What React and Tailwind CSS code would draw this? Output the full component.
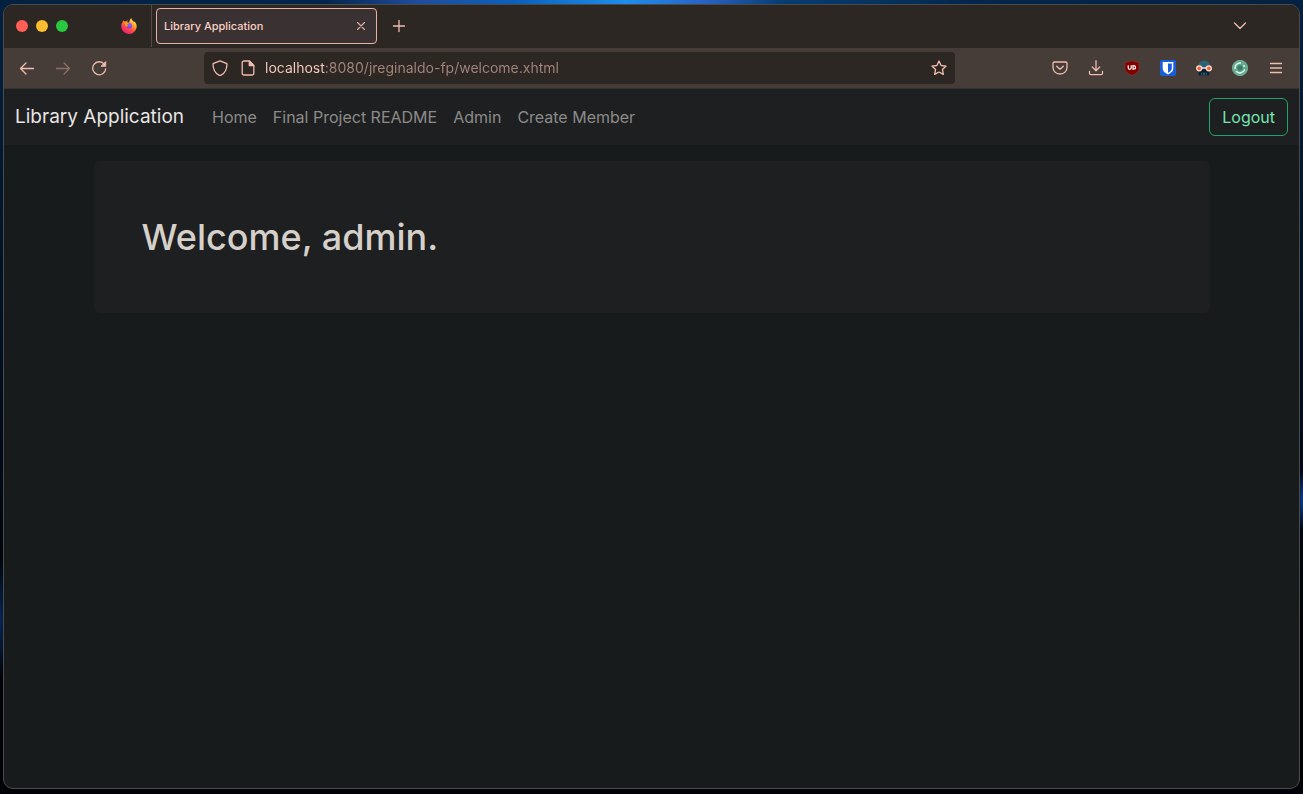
import React from "react";

const line = {
  fill: "none",
  stroke: "currentColor",
  strokeWidth: 1.3,
  strokeLinecap: "round",
  strokeLinejoin: "round",
};

function Icon({ children, className = "size-4" }) {
  return (
    <svg viewBox="0 0 16 16" className={className} aria-hidden="true" {...line}>
      {children}
    </svg>
  );
}

function ToolButton({ label, children, className = "" }) {
  return (
    <button
      type="button"
      aria-label={label}
      className={`flex h-8 w-9 shrink-0 items-center justify-center ${className}`}
    >
      {children}
    </button>
  );
}

function FirefoxLogo() {
  return (
    <svg viewBox="0 0 16 16" className="size-4" aria-hidden="true">
      <defs>
        <linearGradient id="fx-body" x1="0.85" y1="0.05" x2="0.25" y2="1">
          <stop offset="0" stopColor="#fff44f" />
          <stop offset="0.35" stopColor="#ffa52a" />
          <stop offset="0.6" stopColor="#ff4f3e" />
          <stop offset="1" stopColor="#f0148b" />
        </linearGradient>
        <radialGradient id="fx-globe" cx="0.6" cy="0.3" r="0.8">
          <stop offset="0" stopColor="#b05bf5" />
          <stop offset="1" stopColor="#4a4be0" />
        </radialGradient>
      </defs>
      <path
        fill="url(#fx-body)"
        d="M10.300 0c.1 1.500.9 2.200 2 3.200.4.300.7.700.9 1 .1-.3.100-.6 0-.9 1.500 1 2.500 3 2.500 5.100A7.700 7.600 0 0 1 8 16 7.700 7.700 0 0 1 .2 8.400c0-2 .6-3.400 1.500-4.600.1-.7.400-1.200.7-1.600.1.600.4 1 .8 1.300.6-.2 1.200-.2 1.800 0C5.500 2.900 6.200 2.500 7 2.400c-.6.600-.8 1-.8 1.600.3.400.9.500 1.800.5C8.800 3.500 8.300 1.500 10.300 0z"
      />
      <circle cx="8.200" cy="7.600" r="2.900" fill="url(#fx-globe)" />
      <path
        fill="#ff9a1f"
        d="M3.200 4.600c1.100-.4 2 .1 2.800.4.900.2 1.600 0 2 .1-.1.800-1.500 1-1.700 1.700-.2.800.5 1.300 1.400 1.300-.8.800-2.600.7-3.300-.4-.6-.9-.8-2.200-1.200-3.100z"
      />
    </svg>
  );
}

function UblockIcon() {
  return (
    <svg viewBox="0 0 16 16" className="size-4" aria-hidden="true">
      <path
        d="M8 .6C6 1.900 3.500 2.300 1 2.300v6c0 3.700 3.500 5.300 7 7.300 3.500-2 7-3.600 7-7.300v-6C12.500 2.300 10 1.900 8 .6z"
        fill="#800000"
        stroke="#a33a36"
        strokeWidth=".5"
      />
      <path
        d="M4.200 5.200v2.600a1.500 1.500 0 0 0 3 0V5.200M9 5.700v3.400h.8a1.700 1.700 0 0 0 0-3.400z"
        fill="none"
        stroke="#fff"
        strokeWidth="1.200"
      />
    </svg>
  );
}

function BitwardenIcon() {
  return (
    <svg viewBox="0 0 16 16" className="size-4" aria-hidden="true">
      <rect width="16" height="16" rx="2" fill="#175ddc" />
      <path d="M2.700 2h10.600v6.400c0 2.800-2.500 4.600-5.300 6-2.800-1.400-5.300-3.200-5.300-6z" fill="#fff" />
      <path d="M8 3.500h3.800v4.900c0 1.900-1.800 3.200-3.800 4.300z" fill="#175ddc" />
    </svg>
  );
}

function GogglesIcon() {
  return (
    <svg viewBox="0 0 16 16" className="size-4" aria-hidden="true">
      <path d="M2 8C1.800 3.500 4.500.6 8.200.6S14.500 3.500 14 8z" fill="#2b6175" />
      <path d="M2.500 9h11l-.3 6.400H2.800z" fill="#10202b" />
      <path d="M5 12.800h6v2.400H5z" fill="#2b6175" />
      <path d="M6.500 13v2M9.500 13v2" stroke="#10202b" />
      <path d="M6 8h4" stroke="#f4ded3" strokeWidth="1.500" />
      <circle cx="3.200" cy="8.300" r="2.500" fill="#f0603c" stroke="#f7e0d6" strokeWidth="1.300" />
      <circle cx="12.800" cy="8.300" r="2.500" fill="#f0603c" stroke="#f7e0d6" strokeWidth="1.300" />
    </svg>
  );
}

function CookieIcon() {
  return (
    <svg viewBox="0 0 16 16" className="size-4" aria-hidden="true">
      <circle cx="8" cy="8" r="7.700" fill="#63a98f" stroke="#8cc5b0" strokeWidth=".6" />
      <circle cx="8" cy="8" r="2.700" fill="#3d7c69" />
      <path
        d="M8.500 3A5 5 0 0 0 3 8.500M4.500 11.500a5 5 0 0 0 8-1.500"
        fill="none"
        stroke="#e6f7ef"
        strokeWidth="1.500"
        strokeLinecap="round"
      />
      <circle cx="12" cy="6" r=".9" fill="#f2fff9" />
    </svg>
  );
}

function TabStrip() {
  return (
    <div className="flex h-[43px] items-center bg-[#2d2724] pb-px">
      <div className="flex gap-2 pl-3">
        <button type="button" aria-label="Close window" className="size-3 rounded-full bg-[#ff5f57]" />
        <button type="button" aria-label="Minimize window" className="size-3 rounded-full bg-[#febc2e]" />
        <button type="button" aria-label="Zoom window" className="size-3 rounded-full bg-[#28c840]" />
      </div>
      <button
        type="button"
        aria-label="Firefox"
        className="ml-8 flex h-full w-[52px] items-center justify-center border-r border-[#584843] pl-1.5"
      >
        <FirefoxLogo />
      </button>
      <div className="ml-1 flex h-9 w-[221px] items-center justify-between rounded border border-[#e9b4a6] bg-[#393132] pr-[7px] pl-[7px]">
        <span className="text-[11px] leading-4 font-medium text-[#fbd0c4]">Library Application</span>
        <button type="button" aria-label="Close tab" className="flex size-4 items-center justify-center text-[#dcb0a4]">
          <Icon>
            <path d="M4.500 4.500l7 7M11.500 4.500l-7 7" strokeWidth="1.100" />
          </Icon>
        </button>
      </div>
      <ToolButton label="New tab" className="ml-1 text-[#f0bdaf]">
        <Icon>
          <path d="M8 2.500v11M2.500 8h11" />
        </Icon>
      </ToolButton>
      <ToolButton label="List all tabs" className="mr-[41px] ml-auto text-[#f0bdaf]">
        <Icon>
          <path d="M2.500 5l5.500 5.500L13.500 5" />
        </Icon>
      </ToolButton>
    </div>
  );
}

function Toolbar() {
  return (
    <div className="flex h-[41px] items-center border-b border-[#353130] bg-[#463d38] px-[5px] text-[#f0bdaf]">
      <ToolButton label="Back">
        <Icon>
          <path d="M14.500 8.500h-13M7 3L1.500 8.500 7 14" />
        </Icon>
      </ToolButton>
      <ToolButton label="Forward" className="text-[#8c7168]">
        <Icon>
          <path d="M1.500 8.500h13M9 3l5.500 5.500L9 14" />
        </Icon>
      </ToolButton>
      <ToolButton label="Reload">
        <Icon>
          <path d="M13.300 4.200A6.500 6.500 0 1 0 14.700 8.800" />
          <path d="M14.700 2v4.200h-4.200z" fill="currentColor" strokeWidth="1" />
        </Icon>
      </ToolButton>
      <div className="mx-[87px] flex h-8 min-w-0 flex-1 items-center rounded bg-[#2d2724] px-2">
        <button type="button" aria-label="Tracking protection">
          <Icon>
            <path d="M8 .8l6.300 2.500c.5.200.7.500.7.900-.2 5.500-2.500 9.300-6 10.900-.7.300-1.300.3-2 0C3.500 13.500 1.200 9.700 1 4.200c0-.4.200-.7.700-.9z" />
          </Icon>
        </button>
        <button type="button" aria-label="Site information" className="ml-3">
          <Icon>
            <path d="M9.500 1H4a1.800 1.800 0 0 0-1.800 1.800v10.400A1.800 1.800 0 0 0 4 15h8a1.800 1.800 0 0 0 1.800-1.800V5.500z" />
            <path d="M9.300 1.200v4.500h4.500z" fill="currentColor" />
          </Icon>
        </button>
        <input
          aria-label="Address"
          defaultValue="localhost:8080/jreginaldo-fp/welcome.xhtml"
          className="ml-[9px] min-w-0 flex-1 bg-[linear-gradient(to_right,#fccfc3_60px,#a3857b_60px)] bg-clip-text text-sm text-transparent caret-[#fccfc3] outline-none"
        />
        <button type="button" aria-label="Bookmark this page">
          <Icon>
            <path d="M8 1l2.100 4.500 5 .6-3.700 3.400 1 4.900L8 12l-4.400 2.400 1-4.900L.9 6.100l5-.6z" />
          </Icon>
        </button>
      </div>
      <ToolButton label="Save to Pocket">
        <Icon>
          <path d="M2.300 2h11.400c.8 0 1.300.5 1.300 1.300v4C15 11.300 12 14 8 14s-7-2.700-7-6.700v-4C1 2.500 1.500 2 2.300 2z" />
          <path d="M4.700 6.200L8 9.300l3.300-3.100" />
        </Icon>
      </ToolButton>
      <ToolButton label="Downloads">
        <Icon>
          <path d="M8 .7v10M4.300 7L8 10.700 11.700 7M1.500 11.500v1.700c0 .8.600 1.500 1.500 1.500h10c.9 0 1.500-.7 1.500-1.500v-1.700" />
        </Icon>
      </ToolButton>
      <ToolButton label="uBlock Origin">
        <UblockIcon />
      </ToolButton>
      <ToolButton label="Bitwarden">
        <BitwardenIcon />
      </ToolButton>
      <ToolButton label="Privacy goggles">
        <GogglesIcon />
      </ToolButton>
      <ToolButton label="Cookie manager">
        <CookieIcon />
      </ToolButton>
      <ToolButton label="Open application menu">
        <Icon>
          <path d="M2.500 3.500h11M2.500 8h11M2.500 12.500h11" />
        </Icon>
      </ToolButton>
    </div>
  );
}

const links = ["Home", "Final Project README", "Admin", "Create Member"];

function Navbar() {
  return (
    <header className="flex h-14 items-center bg-[#1e1f21] px-[11px]">
      <a href="#" className="text-[19px] leading-[30px] text-[#e8e6e3]">
        Library Application
      </a>
      <nav className="ml-7 flex gap-4 text-base text-[#8c8b88]">
        {links.map((label) => (
          <a key={label} href="#">
            {label}
          </a>
        ))}
      </nav>
      <button
        type="button"
        className="ml-auto h-[38px] rounded-md border border-[#1fa565] px-3 text-base text-[#75e6b0]"
      >
        Logout
      </button>
    </header>
  );
}

export default function App() {
  return (
    <div className="flex min-h-screen flex-col bg-[radial-gradient(8px_60px_at_0_78%,#06285c,transparent),radial-gradient(8px_30px_at_100%_63%,#0b3f8f,transparent),linear-gradient(to_bottom,#04213f,#021226_35%,#000207_80%)] font-['Inter','Liberation_Sans',sans-serif]">
      <div className="h-1 bg-[linear-gradient(to_right,#03213f,#04254b_25%,#1f4c9c_32%,#0b62bd_40%,#1f8de9_48%,#2a62c4_54%,#073d73_60%,#04264c_75%,#04213f)]" />
      <div className="mx-[3px] mb-[5px] flex flex-1 flex-col overflow-hidden rounded-[10px] border border-[#4b4b4a] bg-[#181b1b]">
        <TabStrip />
        <Toolbar />
        <Navbar />
        <main className="mx-auto mt-4 w-full max-w-[1140px] px-3">
          <section className="rounded-md bg-[#1e1f21] p-12">
            <h1 className="text-4xl leading-14 font-medium text-[#d5d0c9]">Welcome, admin.</h1>
          </section>
        </main>
      </div>
    </div>
  );
}
